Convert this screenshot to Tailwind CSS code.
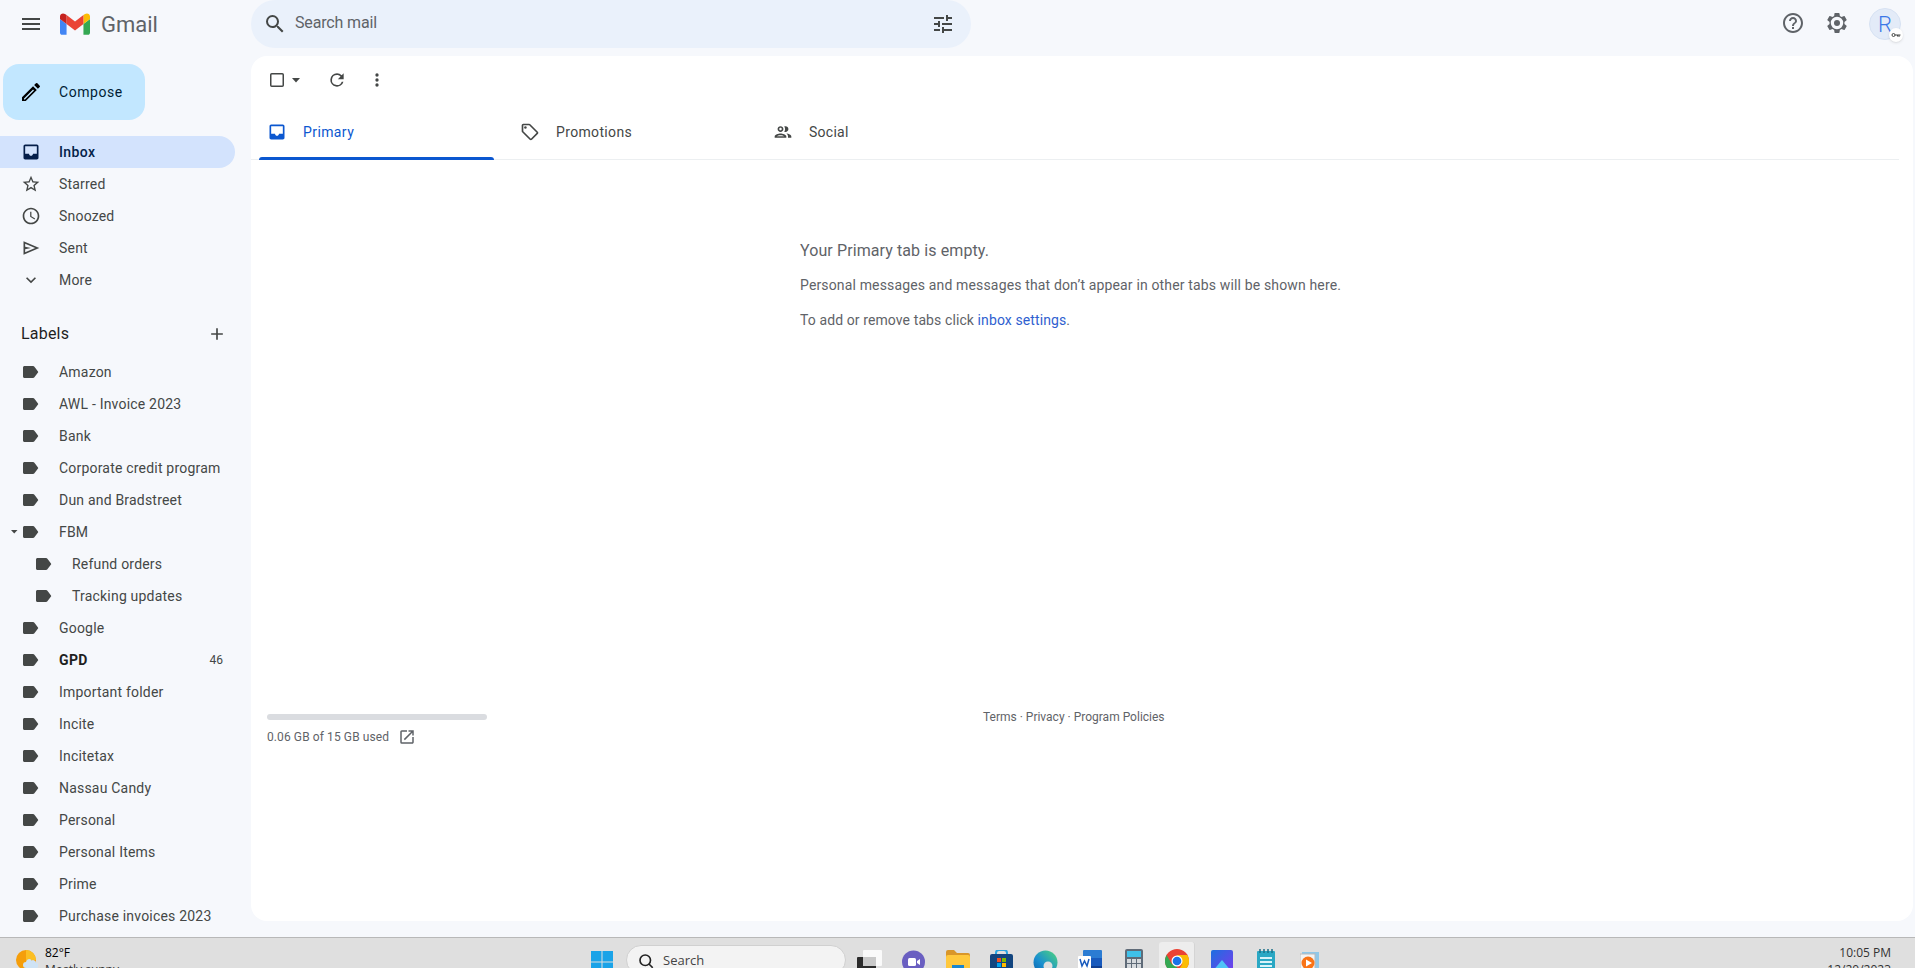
<!DOCTYPE html>
<html lang="en">
<head>
    <meta charset="UTF-8">
    <title>Gmail</title>
    <script src="https://cdn.jsdelivr.net/npm/@tailwindcss/browser@4"></script>
</head>
<body class="bg-[#f6f8fc] text-[#444746] font-['Roboto',sans-serif] overflow-hidden">

<svg class="hidden">
    <symbol id="label" viewBox="0 0 20 20"><path d="M4.5 4H13c.6 0 1.100.3 1.400.7l3.600 4.700c.3.4.3.9 0 1.200l-3.600 4.700c-.3.4-.8.700-1.400.7H4.500C3.700 16 3 15.300 3 14.500v-9C3 4.700 3.700 4 4.500 4z"/></symbol>
</svg>

<div class="h-[968px] w-[1915px] flex flex-col overflow-hidden">

    <!-- Top bar -->
    <header class="h-14 shrink-0 flex">
        <div class="w-[251px] shrink-0 flex items-start pt-[12px]">
            <svg class="ml-[19px] w-6 h-6" viewBox="0 0 24 24" fill="#444746"><path d="M3 18h18v-2H3v2zm0-5h18v-2H3v2zm0-7v2h18V6H3z"/></svg>
            <svg class="ml-[17px] mt-[1px] w-[30px] h-[22px]" viewBox="0 0 32 23">
                <path fill="#4285f4" d="M2.200 23H7V11.500L0 6.200V20.800C0 22 1 23 2.200 23z"/>
                <path fill="#34a853" d="M25 23h4.800c1.200 0 2.200-1 2.200-2.200V6.200L25 11.500z"/>
                <path fill="#fbbc04" d="M25 2v9.500l7-5.300V3.500C32 .8 28.900-.8 26.700.9z"/>
                <path fill="#ea4335" d="M7 11.500V2l9 6.800L25 2v9.500l-9 6.800z"/>
                <path fill="#c5221f" d="M0 3.500v2.700l7 5.300V2L5.300.9C3.100-.8 0 .8 0 3.500z"/>
            </svg>
            <span class="ml-[11px] mt-[1px] text-[22px] leading-6 text-[#5f6368]">Gmail</span>
        </div>
        <div class="w-[720px] h-12 rounded-[24px] bg-[#eaf1fb] flex items-center pl-[12px] pr-[13px]">
            <svg class="w-6 h-6" viewBox="0 0 24 24" fill="#444746"><path d="M15.500 14h-.79l-.28-.27A6.470 6.470 0 0 0 16 9.500 6.500 6.500 0 1 0 9.500 16c1.610 0 3.090-.59 4.230-1.570l.27.28v.79l5 4.990L20.490 19l-4.990-5zm-6 0C7.010 14 5 11.990 5 9.500S7.010 5 9.500 5 14 7.010 14 9.500 11.990 14 9.500 14z"/></svg>
            <span class="ml-[8px] -mt-[2px] text-base tracking-[-0.15px] text-[#5f6368] flex-1">Search mail</span>
            <svg class="w-6 h-6 mr-[3px]" viewBox="0 0 24 24" fill="#444746"><path d="M3 17v2h6v-2H3zM3 5v2h10V5H3zm10 16v-2h8v-2h-8v-2h-2v6h2zM7 9v2H3v2h4v2h2V9H7zm14 4v-2H11v2h10zm-6-4h2V7h4V5h-4V3h-2v6z"/></svg>
        </div>
        <div class="flex-1 flex justify-end items-start pt-[11px] pr-[14px]">
            <svg class="w-6 h-6 mr-[20px]" viewBox="0 0 24 24" fill="#5f6368"><path d="M11 18h2v-2h-2v2zm1-16C6.480 2 2 6.480 2 12s4.480 10 10 10 10-4.480 10-10S17.520 2 12 2zm0 18c-4.410 0-8-3.590-8-8s3.590-8 8-8 8 3.590 8 8-3.590 8-8 8zm0-14c-2.210 0-4 1.790-4 4h2c0-1.100.9-2 2-2s2 .9 2 2c0 2-3 1.750-3 5h2c0-2.250 3-2.500 3-5 0-2.210-1.790-4-4-4z"/></svg>
            <svg class="w-6 h-6 mr-[20px]" viewBox="0 0 24 24" fill="#5f6368"><path fill-rule="evenodd" d="M19.430 12.980c.04-.32.07-.64.07-.98s-.03-.66-.07-.98l2.110-1.650c.19-.15.24-.42.12-.64l-2-3.460c-.12-.22-.39-.3-.61-.22l-2.490 1c-.52-.4-1.080-.73-1.690-.98l-.38-2.650A.488.488 0 0 0 14 2h-4c-.25 0-.46.18-.49.42l-.38 2.650c-.61.25-1.170.59-1.690.98l-2.490-1c-.23-.09-.49 0-.61.22l-2 3.460c-.13.22-.07.49.12.64l2.110 1.650c-.04.32-.07.65-.07.98s.03.66.07.98l-2.110 1.650c-.19.15-.24.42-.12.64l2 3.460c.12.22.39.3.61.22l2.490-1c.52.4 1.080.73 1.690.98l.38 2.650c.03.24.24.42.49.42h4c.25 0 .46-.18.49-.42l.38-2.650c.61-.25 1.170-.59 1.690-.98l2.490 1c.23.09.49 0 .61-.22l2-3.460c.12-.22.07-.49-.12-.64l-2.110-1.650zM12 18.200a6.200 6.200 0 1 1 0-12.400 6.200 6.200 0 0 1 0 12.400z"/><circle cx="12" cy="12" r="3"/></svg>
            <div class="relative w-8 h-8 -mt-[3px] rounded-full bg-[#e3ebf8] border border-[#d7e2f3] flex items-center justify-center text-[22px] font-light text-[#3b78e7]">
                R
                <span class="absolute -right-[3px] -bottom-[3px] w-[14px] h-[14px] rounded-full bg-white shadow flex items-center justify-center">
                    <svg class="w-[10px] h-[6px]" viewBox="0 0 10 6" fill="none" stroke="#444746" stroke-width="1"><circle cx="2.500" cy="3" r="1.500"/><path d="M4 3h5.500M8 3v2M6.500 3v1.500"/></svg>
                </span>
            </div>
        </div>
    </header>

    <div class="flex-1 flex min-h-0">

        <!-- Sidebar -->
        <aside class="w-[251px] shrink-0 overflow-hidden tracking-[0.2px]">
            <div class="ml-[3px] mt-2 w-[142px] h-14 rounded-2xl bg-[#c2e7ff] flex items-center text-sm tracking-[0.55px] text-[#001d35]">
                <svg class="ml-[16px] w-6 h-6" viewBox="0 0 24 24" fill="#000"><path d="M3 17.250V21h3.750L17.810 9.940l-3.750-3.750L3 17.250zM5.920 19.500H5v-.92l9.060-9.060.92.92L5.920 19.500zM20.710 7.040a1 1 0 0 0 0-1.410l-2.340-2.340a1 1 0 0 0-1.410 0l-1.830 1.830 3.750 3.750 1.830-1.830z"/></svg>
                <span class="ml-[16px]">Compose</span>
            </div>

            <nav class="mt-4 text-sm">
                <div class="h-8 w-[235px] rounded-r-2xl bg-[#d3e3fd] flex items-center font-medium tracking-[0.4px] text-[#041e49]">
                    <svg class="ml-[21px] w-[20px] h-[20px]" viewBox="0 0 24 24" fill="#041e49"><path d="M19 3H5c-1.100 0-2 .9-2 2v14c0 1.100.9 2 2 2h14c1.100 0 2-.9 2-2V5c0-1.100-.9-2-2-2zm0 11h-4.500c-.3 1.400-1.300 2.500-2.500 2.500s-2.200-1.100-2.500-2.500H5V5h14v9z"/></svg>
                    <span class="ml-[18px]">Inbox</span>
                </div>
                <div class="h-8 flex items-center">
                    <svg class="ml-[21px] w-[20px] h-[20px]" viewBox="0 0 24 24" fill="#444746"><path d="M22 9.240l-7.190-.62L12 2 9.190 8.630 2 9.240l5.460 4.730L5.820 21 12 17.270 18.180 21l-1.630-7.030L22 9.240zM12 15.400l-3.760 2.270 1-4.280-3.320-2.880 4.380-.38L12 6.100l1.710 4.040 4.380.38-3.320 2.880 1 4.280L12 15.400z"/></svg>
                    <span class="ml-[18px]">Starred</span>
                </div>
                <div class="h-8 flex items-center">
                    <svg class="ml-[21px] w-[20px] h-[20px]" viewBox="0 0 24 24" fill="#444746"><path d="M11.990 2C6.470 2 2 6.480 2 12s4.470 10 9.990 10C17.520 22 22 17.520 22 12S17.520 2 11.990 2zM12 20c-4.420 0-8-3.580-8-8s3.580-8 8-8 8 3.580 8 8-3.580 8-8 8zm.5-13H11v6l5.250 3.150.75-1.230-4.500-2.670z"/></svg>
                    <span class="ml-[18px]">Snoozed</span>
                </div>
                <div class="h-8 flex items-center">
                    <svg class="ml-[21px] w-[20px] h-[20px]" viewBox="0 0 24 24" fill="#444746"><path d="M3 4v16l19-8L3 4zm2 3l12 5-12 5v-3.500l7-1.500-7-1.500V7z"/></svg>
                    <span class="ml-[18px]">Sent</span>
                </div>
                <div class="h-8 flex items-center">
                    <svg class="ml-[21px] w-[20px] h-[20px]" viewBox="0 0 24 24" fill="#444746"><path d="M16.590 8.590L12 13.170 7.410 8.590 6 10l6 6 6-6z"/></svg>
                    <span class="ml-[18px]">More</span>
                </div>
            </nav>

            <div class="mt-[22px] h-8 flex items-center justify-between pl-[21px] pr-[24px] text-base text-[#1f1f1f]">
                <span>Labels</span>
                <svg class="w-[20px] h-[20px]" viewBox="0 0 24 24" fill="#444746"><path d="M19 13h-6v6h-2v-6H5v-2h6V5h2v6h6z"/></svg>
            </div>

            <ul class="mt-[6px] text-sm">
                <li class="h-8 flex items-center"><svg class="ml-[20px] w-[20px] h-[20px]" fill="#444746"><use href="#label"/></svg><span class="ml-[19px]">Amazon</span></li>
                <li class="h-8 flex items-center"><svg class="ml-[20px] w-[20px] h-[20px]" fill="#444746"><use href="#label"/></svg><span class="ml-[19px]">AWL - Invoice 2023</span></li>
                <li class="h-8 flex items-center"><svg class="ml-[20px] w-[20px] h-[20px]" fill="#444746"><use href="#label"/></svg><span class="ml-[19px]">Bank</span></li>
                <li class="h-8 flex items-center"><svg class="ml-[20px] w-[20px] h-[20px]" fill="#444746"><use href="#label"/></svg><span class="ml-[19px]">Corporate credit program</span></li>
                <li class="h-8 flex items-center"><svg class="ml-[20px] w-[20px] h-[20px]" fill="#444746"><use href="#label"/></svg><span class="ml-[19px]">Dun and Bradstreet</span></li>
                <li class="h-8 flex items-center"><svg class="ml-[11px] w-[9px] h-[5px]" viewBox="0 0 9 5" fill="#444746"><path d="M0 0h6.500L3.200 3.500z"/></svg><svg class="w-[20px] h-[20px]" fill="#444746"><use href="#label"/></svg><span class="ml-[19px]">FBM</span></li>
                <li class="h-8 flex items-center"><svg class="ml-[33px] w-[20px] h-[20px]" fill="#444746"><use href="#label"/></svg><span class="ml-[19px]">Refund orders</span></li>
                <li class="h-8 flex items-center"><svg class="ml-[33px] w-[20px] h-[20px]" fill="#444746"><use href="#label"/></svg><span class="ml-[19px]">Tracking updates</span></li>
                <li class="h-8 flex items-center"><svg class="ml-[20px] w-[20px] h-[20px]" fill="#444746"><use href="#label"/></svg><span class="ml-[19px]">Google</span></li>
                <li class="h-8 flex items-center"><svg class="ml-[20px] w-[20px] h-[20px]" fill="#444746"><use href="#label"/></svg><span class="ml-[19px] font-bold tracking-[0.4px] text-[#1f1f1f]">GPD</span><span class="ml-auto mr-[28px] text-xs tracking-normal">46</span></li>
                <li class="h-8 flex items-center"><svg class="ml-[20px] w-[20px] h-[20px]" fill="#444746"><use href="#label"/></svg><span class="ml-[19px]">Important folder</span></li>
                <li class="h-8 flex items-center"><svg class="ml-[20px] w-[20px] h-[20px]" fill="#444746"><use href="#label"/></svg><span class="ml-[19px]">Incite</span></li>
                <li class="h-8 flex items-center"><svg class="ml-[20px] w-[20px] h-[20px]" fill="#444746"><use href="#label"/></svg><span class="ml-[19px]">Incitetax</span></li>
                <li class="h-8 flex items-center"><svg class="ml-[20px] w-[20px] h-[20px]" fill="#444746"><use href="#label"/></svg><span class="ml-[19px]">Nassau Candy</span></li>
                <li class="h-8 flex items-center"><svg class="ml-[20px] w-[20px] h-[20px]" fill="#444746"><use href="#label"/></svg><span class="ml-[19px]">Personal</span></li>
                <li class="h-8 flex items-center"><svg class="ml-[20px] w-[20px] h-[20px]" fill="#444746"><use href="#label"/></svg><span class="ml-[19px]">Personal Items</span></li>
                <li class="h-8 flex items-center"><svg class="ml-[20px] w-[20px] h-[20px]" fill="#444746"><use href="#label"/></svg><span class="ml-[19px]">Prime</span></li>
                <li class="h-8 flex items-center"><svg class="ml-[20px] w-[20px] h-[20px]" fill="#444746"><use href="#label"/></svg><span class="ml-[19px]">Purchase invoices 2023</span></li>
            </ul>
        </aside>

        <!-- Main panel -->
        <main class="flex-1 mb-[16px] mr-[2px] bg-white rounded-2xl flex flex-col min-w-0">
            <div class="h-10 mt-[4px] flex items-center pl-[16px]">
                <svg class="w-5 h-5" viewBox="0 0 20 20" fill="none" stroke="#444746" stroke-width="1.500"><rect x="3.750" y="3.750" width="12.500" height="12.500" rx="1"/></svg>
                <svg class="ml-[5px] w-[8px] h-[5px]" viewBox="0 0 8 5" fill="#444746"><path d="M0 0h8L4 4.500z"/></svg>
                <svg class="ml-[27px] w-5 h-5" viewBox="0 0 24 24" fill="#444746"><path d="M17.650 6.350A7.960 7.960 0 0 0 12 4a8 8 0 1 0 7.730 10h-2.080A6 6 0 1 1 12 6c1.660 0 3.140.69 4.220 1.780L13 11h7V4l-2.350 2.350z"/></svg>
                <svg class="ml-[20px] w-5 h-5" viewBox="0 0 24 24" fill="#444746"><path d="M12 8a2 2 0 1 0 0-4 2 2 0 0 0 0 4zm0 2a2 2 0 1 0 0 4 2 2 0 0 0 0-4zm0 6a2 2 0 1 0 0 4 2 2 0 0 0 0-4z"/></svg>
            </div>

            <div class="mt-[4px] h-[56px] mr-[14px] flex border-b border-[#eceff1] text-sm tracking-[0.25px] shrink-0">
                <div class="ml-[8px] w-[235px] relative flex items-center text-[#0b57d0]">
                    <svg class="ml-[8px] w-5 h-5" viewBox="0 0 24 24" fill="#0b57d0"><path d="M19 3H5c-1.100 0-2 .9-2 2v14c0 1.100.9 2 2 2h14c1.100 0 2-.9 2-2V5c0-1.100-.9-2-2-2zm0 11h-4.500c-.3 1.400-1.300 2.500-2.500 2.500s-2.200-1.100-2.500-2.500H5V5h14v9z"/></svg>
                    <span class="ml-[16px] tracking-[0.4px]">Primary</span>
                    <span class="absolute left-0 right-0 -bottom-px h-[3px] bg-[#0b57d0] rounded-t-[3px]"></span>
                </div>
                <div class="ml-[26px] w-[253px] flex items-center">
                    <svg class="w-5 h-5" viewBox="0 0 24 24" fill="#444746"><path d="M21.410 11.580l-9-9C12.050 2.220 11.550 2 11 2H4c-1.100 0-2 .9-2 2v7c0 .55.22 1.050.59 1.420l9 9c.36.36.86.58 1.410.58s1.050-.22 1.410-.59l7-7c.37-.36.59-.86.59-1.410s-.23-1.060-.59-1.420zM13 20.010L4 11V4h7v-.01l9 9-7 7.020z"/><circle cx="6.500" cy="6.500" r="1.500"/></svg>
                    <span class="ml-[16px] tracking-[0.35px]">Promotions</span>
                </div>
                <div class="flex items-center">
                    <svg class="w-5 h-5" viewBox="0 0 24 24" fill="#444746"><path d="M9 13.750c-2.340 0-7 1.170-7 3.500V19h14v-1.750c0-2.330-4.660-3.500-7-3.500zM4.340 17c.84-.58 2.870-1.250 4.660-1.250s3.820.67 4.660 1.250H4.340zM9 12c1.930 0 3.500-1.570 3.500-3.500S10.930 5 9 5 5.500 6.570 5.500 8.500 7.070 12 9 12zm0-5c.83 0 1.500.67 1.500 1.500S9.830 10 9 10s-1.500-.67-1.500-1.500S8.170 7 9 7zm7.040 6.810c1.160.84 1.960 1.960 1.960 3.440V19h4v-1.750c0-2.020-3.500-3.170-5.960-3.440zM15 12c1.930 0 3.500-1.570 3.500-3.500S16.930 5 15 5c-.54 0-1.040.13-1.500.35.63.89 1 1.980 1 3.150s-.37 2.260-1 3.150c.46.22.96.35 1.500.35z"/></svg>
                    <span class="ml-[16px]">Social</span>
                </div>
            </div>

            <div class="flex-1 flex flex-col">
                <div class="pl-[549px] pt-[81px] text-sm tracking-[0.15px] text-[#5f6368]">
                    <p class="text-base leading-5 tracking-[0.1px]">Your Primary tab is empty.</p>
                    <p class="mt-[14px] leading-5">Personal messages and messages that don’t appear in other tabs will be shown here.</p>
                    <p class="mt-[15px] leading-5 tracking-[0.1px]">To add or remove tabs click <span class="text-[#2f5fd0]">inbox settings</span>.</p>
                </div>

                <div class="mt-[384px] flex items-start pl-[16px] text-xs text-[#5f6368]">
                    <div class="w-[220px] shrink-0">
                        <div class="h-[6px] rounded-full bg-[#dadce0]"></div>
                        <div class="mt-[8px] flex items-center">
                            <span class="tracking-[0.1px]">0.06 GB of 15 GB used</span>
                            <svg class="ml-[9px] w-[18px] h-[18px]" viewBox="0 0 24 24" fill="#5f6368"><path d="M19 19H5V5h7V3H5a2 2 0 0 0-2 2v14a2 2 0 0 0 2 2h14c1.100 0 2-.9 2-2v-7h-2v7zM14 3v2h3.590l-9.830 9.830 1.410 1.410L19 6.410V10h2V3h-7z"/></svg>
                        </div>
                    </div>
                    <div class="ml-[496px] -mt-[5px]">Terms · Privacy · Program Policies</div>
                </div>
            </div>
        </main>
    </div>

    <!-- Taskbar, cut off by the screenshot -->
    <footer class="h-[31px] shrink-0 bg-[#dfdfdf] border-t border-[#b8b8b8] overflow-hidden flex items-start relative text-black">
        <svg class="ml-[16px] mt-[12px] w-[22px] h-[22px]" viewBox="0 0 22 22">
            <circle cx="10" cy="10" r="10" fill="#f59e0b"/>
            <path d="M10 0a10 10 0 0 1 10 10H10z" fill="#fbbf24"/>
            <path d="M10 12a3 3 0 0 1 5.500-1.500A3 3 0 0 1 20 13a2.500 2.500 0 0 1 0 5H10a3 3 0 0 1 0-6z" fill="#cfe3f5"/>
        </svg>
        <div class="ml-[7px] mt-[6px] text-xs leading-[17px] font-['Open_Sans',sans-serif]">
            <div>82°F</div>
            <div class="text-[#333]">Mostly sunny</div>
        </div>

        <div class="absolute left-[590px] top-0 flex items-start">
            <svg class="mt-[12px] w-[24px] h-[24px]" viewBox="0 0 24 24" fill="#1aa3e8"><path d="M1 1h10.500v10.500H1zM12.500 1H23v10.500H12.500zM1 12.500h10.500V23H1zM12.500 12.500H23V23H12.500z"/></svg>
            <div class="ml-[12px] mt-[7px] w-[220px] h-[30px] rounded-full bg-[#f3f3f3] border border-[#d0d0d0] flex items-center text-[13px] text-[#444] font-['Open_Sans',sans-serif]">
                <svg class="ml-[10px] mt-[2px] w-[18px] h-[18px]" viewBox="0 0 24 24" fill="none" stroke="#222" stroke-width="2.200"><circle cx="11" cy="11" r="7"/><path d="M16 16l5 5"/></svg>
                <span class="ml-[8px] mt-[2px]">Search</span>
            </div>
            <!-- task view -->
            <svg class="ml-[11px] mt-[12px] w-[25px] h-[24px]" viewBox="0 0 25 24">
                <rect x="6" y="0" width="19" height="16" rx="1" fill="#fafafa"/>
                <rect x="0" y="7" width="19" height="17" rx="1" fill="#2b2b2b"/>
                <rect x="6" y="7" width="13" height="9" fill="#c9c9c9"/>
            </svg>
            <!-- meet -->
            <svg class="ml-[20px] mt-[12px] w-[23px] h-[24px]" viewBox="0 0 23 24">
                <circle cx="11.500" cy="12" r="11.500" fill="#6a5fc1"/>
                <rect x="6" y="8" width="8" height="8" rx="1.500" fill="#fff"/>
                <path d="M15 11l3-2v6l-3-2z" fill="#fff"/>
            </svg>
            <!-- explorer -->
            <svg class="ml-[21px] mt-[12px] w-[24px] h-[24px]" viewBox="0 0 24 24">
                <path d="M0 2a2 2 0 0 1 2-2h6l3 3h11a2 2 0 0 1 2 2v3H0z" fill="#d9962a"/>
                <rect x="0" y="5" width="24" height="19" rx="2" fill="#ffc83d"/>
                <rect x="6" y="15" width="12" height="9" fill="#1a86d0"/>
            </svg>
            <!-- store -->
            <svg class="ml-[20px] mt-[12px] w-[23px] h-[24px]" viewBox="0 0 23 24">
                <path d="M6 5V3a3 3 0 0 1 3-3h5a3 3 0 0 1 3 3v2" fill="none" stroke="#2ba5e0" stroke-width="2"/>
                <rect x="0" y="4" width="23" height="20" rx="2" fill="#12457f"/>
                <rect x="7" y="8" width="4" height="4" fill="#f25022"/>
                <rect x="12" y="8" width="4" height="4" fill="#7fba00"/>
                <rect x="7" y="13" width="4" height="4" fill="#00a4ef"/>
                <rect x="12" y="13" width="4" height="4" fill="#ffb900"/>
            </svg>
            <!-- edge -->
            <svg class="ml-[20px] mt-[12px] w-[25px] h-[24px]" viewBox="0 0 25 24">
                <defs><linearGradient id="edge" x1="1" y1="0" x2="0" y2="1"><stop offset="0" stop-color="#4fd67a"/><stop offset="0.6" stop-color="#1a8fd0"/><stop offset="1" stop-color="#0a5fa8"/></linearGradient></defs>
                <circle cx="12.500" cy="12.500" r="12" fill="url(#edge)"/>
                <circle cx="15" cy="16" r="4.500" fill="#dfdfdf"/>
                <rect x="0" y="19" width="12" height="5" fill="#f0931e"/>
            </svg>
            <!-- word -->
            <svg class="ml-[20px] mt-[12px] w-[24px] h-[24px]" viewBox="0 0 24 24">
                <rect x="5" y="0" width="19" height="24" rx="1" fill="#2b7cd3"/>
                <rect x="5" y="8" width="19" height="8" fill="#185abd"/>
                <rect x="5" y="16" width="19" height="8" fill="#103f91"/>
                <rect x="0" y="6" width="13" height="13" rx="1" fill="#fff"/>
                <path d="M2 9l2 7 2.500-5 2.500 5 2-7" fill="none" stroke="#185abd" stroke-width="1.500"/>
            </svg>
            <!-- calculator -->
            <svg class="ml-[23px] mt-[11px] w-[18px] h-[26px]" viewBox="0 0 18 26">
                <rect width="18" height="26" rx="2" fill="#5f6b78"/>
                <rect x="2" y="2" width="14" height="6" fill="#3fc1ea"/>
                <path d="M2 10h4v4H2zM7 10h4v4H7zM12 10h4v4h-4zM2 15h4v4H2zM7 15h4v4H7zM12 15h4v4h-4z" fill="#d5d9dd"/>
            </svg>
            <!-- chrome, open in the taskbar -->
            <div class="ml-[16px] mt-[4px] w-[36px] h-[30px] bg-[#ededed] rounded-t-[3px] border-r border-[#d4d4d4] flex justify-center shrink-0">
                <svg class="mt-[7px] w-[24px] h-[24px]" viewBox="0 0 24 24">
                    <circle cx="12" cy="12" r="12" fill="#ea4335"/>
                    <path d="M12 24A12 12 0 0 1 1.600 6l5.200 9 5.200 3z" fill="#34a853"/>
                    <path d="M12 24l5.200-9L12 6h10.400A12 12 0 0 1 12 24z" fill="#fbbc04"/>
                    <circle cx="12" cy="12" r="5.500" fill="#fff"/>
                    <circle cx="12" cy="12" r="4.300" fill="#1a73e8"/>
                </svg>
            </div>
            <!-- photos -->
            <svg class="ml-[16px] mt-[12px] w-[22px] h-[24px]" viewBox="0 0 22 24">
                <defs><linearGradient id="photos" x1="0" y1="0" x2="1" y2="1"><stop offset="0" stop-color="#1c6fe0"/><stop offset="1" stop-color="#7c3aed"/></linearGradient></defs>
                <rect width="22" height="24" rx="2" fill="url(#photos)"/>
                <path d="M1 22l10-12 10 12z" fill="#4fc3f7"/>
            </svg>
            <!-- notepad -->
            <svg class="ml-[24px] mt-[11px] w-[18px] h-[26px]" viewBox="0 0 18 26">
                <rect y="2" width="18" height="24" rx="1" fill="#2aa8c4"/>
                <path d="M3 0v4M7 0v4M11 0v4M15 0v4" stroke="#1b6f86" stroke-width="1.500"/>
                <path d="M3 9h12M3 13h12M3 17h12" stroke="#d8f3f9" stroke-width="2"/>
            </svg>
            <!-- media player -->
            <svg class="ml-[25px] mt-[14px] w-[19px] h-[22px]" viewBox="0 0 19 22">
                <rect x="2" y="0" width="17" height="22" fill="#8fc7e8"/>
                <rect x="0" y="2" width="15" height="20" fill="#f3f3f3" stroke="#b9b9b9"/>
                <circle cx="8" cy="11" r="6.500" fill="#f97316"/>
                <path d="M6 7.500l6 3.500-6 3.500z" fill="#fff"/>
            </svg>
        </div>

        <div class="ml-auto pr-[24px] mt-[6px] text-right text-xs leading-[17px] font-['Open_Sans',sans-serif] text-[#333]">
            <div>10:05 PM</div>
            <div>12/20/2023</div>
        </div>
    </footer>
</div>
</body>
</html>
